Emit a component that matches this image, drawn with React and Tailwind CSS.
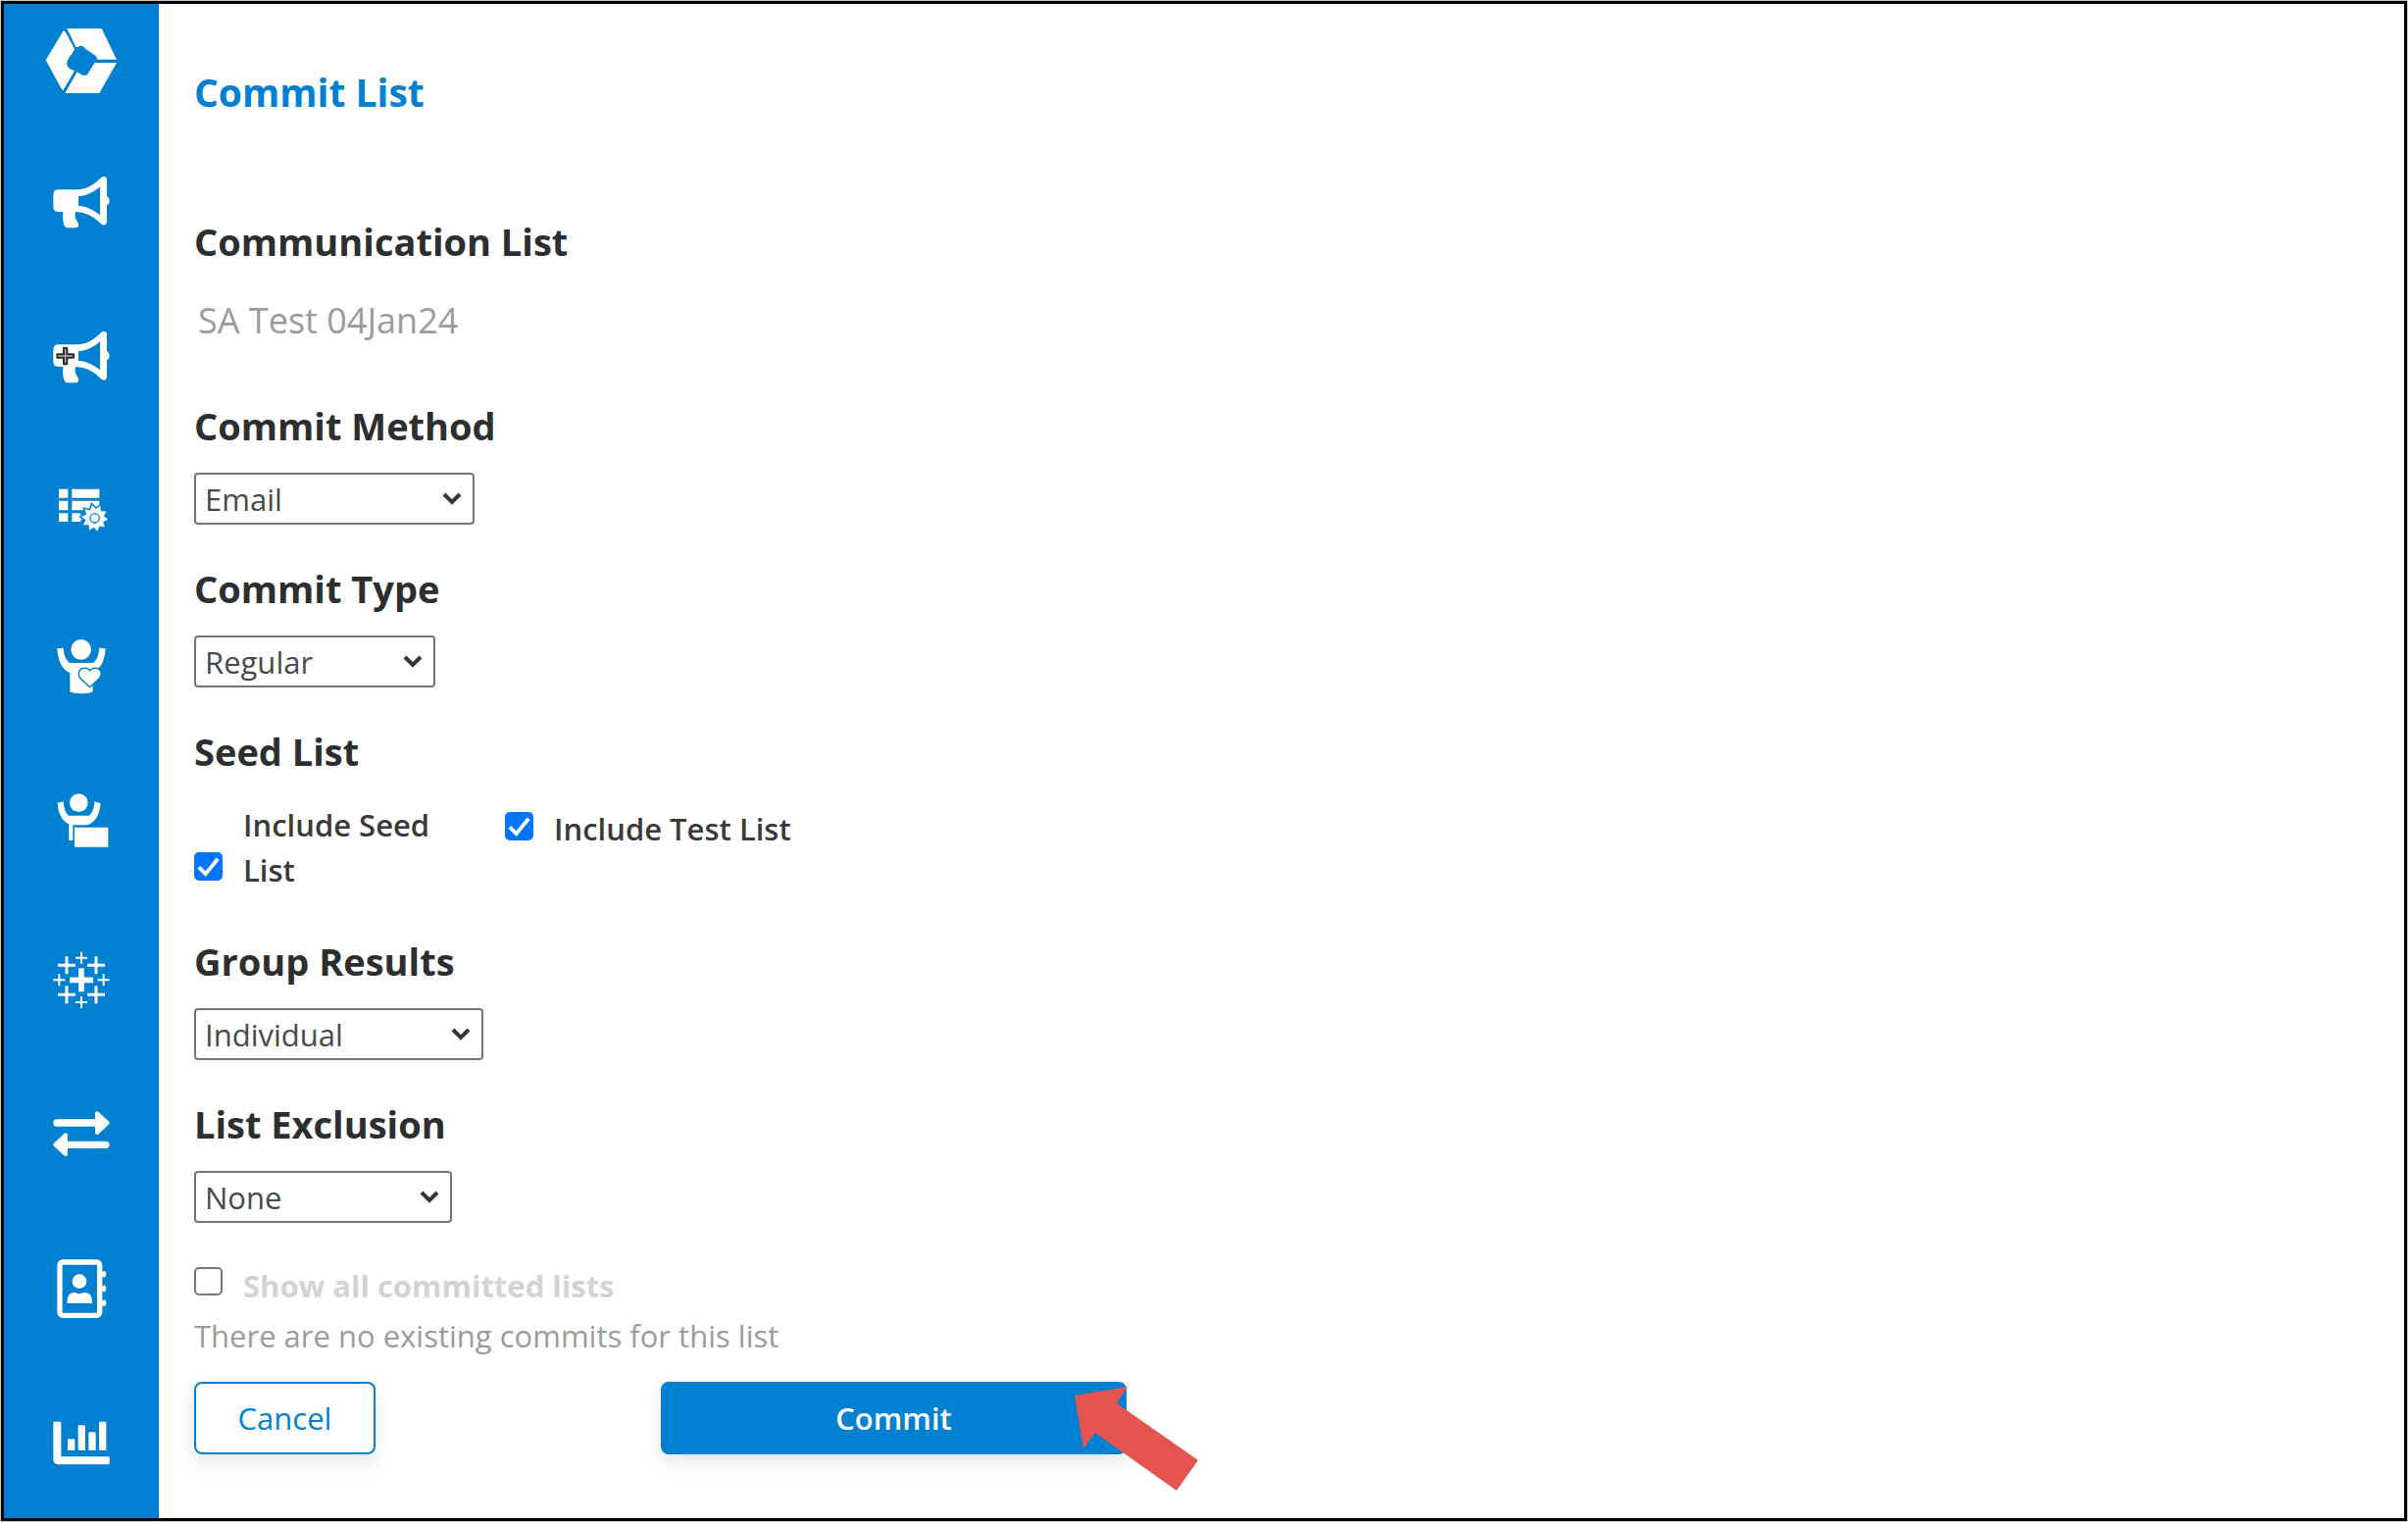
const BLUE = "#0080d1";

function Icon({ viewBox, children }) {
  return (
    <svg viewBox={viewBox} className="h-[60px] w-[60px] overflow-visible" fill="white" aria-hidden="true">
      {children}
    </svg>
  );
}

function Logo() {
  return (
    <svg viewBox="135 81 228 210" className="h-[70px] w-[76px]" fill="white" aria-hidden="true">
      <path d="M205 87H311L357 182H299Q296 171 286 166L261 149C255 140 247 138 240 143L232 144Z" />
      <path d="M357 192L304 285H199L236 220L248 227C257 234 267 231 271 222L288 194Q290 192 293 192Z" />
      <path d="M194 94L201 98L228 150L222 162Q220 168 214 171L206 186Q203 195 207 203Q211 210 218 212L228 217L193 277L187 270L140 184Z" />
    </svg>
  );
}

const megaphonePath =
  "M179 580H240C270 578 290 562 309 544C317 536 327 540 327 549V600Q335 604 335 614Q335 624 327 628V678C327 688 317 692 309 685C290 666 268 650 231 648C228 660 230 669 238 680C243 688 240 697 231 697H209C200 697 197 693 195 685C192 672 192 660 193 648H179Q163 648 163 632V596Q163 580 179 580ZM240 601V629C266 631 288 643 306 658V571C288 587 266 599 240 601Z";

function Megaphone() {
  return (
    <Icon viewBox="159 534 180 180">
      <path fillRule="evenodd" d={megaphonePath} />
    </Icon>
  );
}

function MegaphonePlus() {
  return (
    <Icon viewBox="159 534 180 180">
      <path fillRule="evenodd" d={megaphonePath} />
      <path
        d="M195 590h10v20h20v10h-20v20h-10v-20h-20v-10h20z"
        fill="#aaa"
        stroke="#2c2c2c"
        strokeWidth="6"
        strokeLinejoin="round"
      />
    </Icon>
  );
}

function gearPath(cx, cy, outer, inner, teeth) {
  const points = [];
  for (let i = 0; i < teeth * 2; i++) {
    const r = i % 2 ? inner : outer;
    const a = (Math.PI * i) / teeth + 0.1;
    points.push(`${(cx + r * Math.cos(a)).toFixed(1)} ${(cy + r * Math.sin(a)).toFixed(1)}`);
  }
  return `M${points.join("L")}Z`;
}

function ListSettings() {
  return (
    <Icon viewBox="159 552 180 180">
      <path d="M180 566h28v27h-28zM180 602h28v29h-28zM180 640h28v26h-28zM220 566h84v27h-84zM220 602h84v29h-84zM220 640h24l8 13-6 13h-26z" />
      <path d={gearPath(290, 655, 41, 28, 10)} stroke={BLUE} strokeWidth="9" />
      <path d={gearPath(290, 655, 41, 28, 10)} />
      <circle cx="290" cy="655" r="14" stroke={BLUE} strokeWidth="4" />
    </Icon>
  );
}

function PersonHeart() {
  const heart =
    "M275 239L249 215C238 202 244 187 257 186C266 185 271 189 275 195C279 189 285 185 293 186C307 187 313 202 301 215Z";
  return (
    <Icon viewBox="159 96 180 180">
      <circle cx="248" cy="127" r="31" />
      <path d="M175 124L194 122C196 145 201 158 213 168H285C296 158 302 145 304 122L323 124C321 155 312 183 284 199V256C272 264 226 264 214 256V199C188 187 177 160 175 124Z" />
      <path d={heart} stroke={BLUE} strokeWidth="9" strokeLinejoin="round" />
      <path d={heart} />
    </Icon>
  );
}

function PersonBox() {
  return (
    <Icon viewBox="159 570 180 180">
      <circle cx="241" cy="596" r="28" />
      <path d="M176 596L194 592C196 614 200 627 210 635H272C283 627 288 613 289 592L308 598C304 635 292 655 268 664H223V711H211V661C190 650 178 630 176 596Z" />
      <path d="M228 671h103v60h-103z" />
    </Icon>
  );
}

function plus(cx, cy, arm) {
  return `M${cx - arm} ${cy}h${arm * 2}M${cx} ${cy - arm}v${arm * 2}`;
}

function PlusCluster() {
  return (
    <Icon viewBox="159 84 180 180">
      <path d={plus(249, 178, 36)} stroke="white" strokeWidth="17" />
      <path
        d={plus(204, 133, 27) + plus(294, 133, 27) + plus(204, 223, 27) + plus(294, 223, 27)}
        stroke="white"
        strokeWidth="9"
      />
      <path
        d={plus(249, 110, 18) + plus(249, 246, 18) + plus(181, 178, 18) + plus(317, 178, 18)}
        stroke="white"
        strokeWidth="6"
      />
    </Icon>
  );
}

function Exchange() {
  return (
    <Icon viewBox="159 558 180 180">
      <path d="M174 615H305M193 682H324" stroke="white" strokeWidth="22" strokeLinecap="round" />
      <path
        d="M297 586L329 615L297 645ZM201 652L169 682L201 711Z"
        stroke="white"
        strokeWidth="12"
        strokeLinejoin="round"
      />
    </Icon>
  );
}

function AddressBook() {
  return (
    <Icon viewBox="159 132 180 180">
      <rect x="183" y="141" width="122" height="163" rx="9" fill="none" stroke="white" strokeWidth="16" />
      <path d="M306 178H319M306 222H319M306 266H319" stroke="white" strokeWidth="15" />
      <path d="M317 167q8 2 8 11t-8 11zM317 211q8 2 8 11t-8 11zM317 255q8 2 8 11t-8 11z" />
      <circle cx="243" cy="200" r="22" />
      <path d="M206 267V260C206 242 216 233 229 234Q243 241 257 234C271 233 282 242 282 260V267Z" />
    </Icon>
  );
}

function Chart() {
  return (
    <Icon viewBox="159 606 180 180">
      <path d="M163 632Q163 629 166 629H184Q187 629 187 632V736H332Q335 736 335 739V757Q335 760 332 760H178Q163 759 163 745Z" />
      <rect x="207" y="682" width="22" height="35" rx="4" />
      <rect x="239" y="640" width="22" height="77" rx="4" />
      <rect x="271" y="661" width="22" height="56" rx="4" />
      <rect x="303" y="629" width="22" height="88" rx="4" />
    </Icon>
  );
}

const navItems = [
  ["Campaigns", Megaphone],
  ["New campaign", MegaphonePlus],
  ["List settings", ListSettings],
  ["Supporters", PersonHeart],
  ["Presenters", PersonBox],
  ["Dashboards", PlusCluster],
  ["Transfers", Exchange],
  ["Contacts", AddressBook],
  ["Reports", Chart],
];

function Heading({ children, htmlFor }) {
  return (
    <h2 className="text-[38px] leading-[48px] font-bold text-[#2c2e2f]">
      {htmlFor ? <label htmlFor={htmlFor}>{children}</label> : children}
    </h2>
  );
}

function SelectField({ id, label, value, width }) {
  return (
    <section className="mb-[41px]">
      <Heading htmlFor={id}>{label}</Heading>
      <div className={`relative mt-6 ${width}`}>
        <select
          id={id}
          className="block h-[53px] w-full appearance-none rounded-[4px] border-2 border-[#767676] bg-white pl-[9px] text-[31px] leading-[46px] text-[#454a4d]"
        >
          <option>{value}</option>
        </select>
        <svg
          viewBox="0 0 20 14"
          className="pointer-events-none absolute top-5 right-[13px] h-[14px] w-5"
          fill="none"
          aria-hidden="true"
        >
          <path d="M2 2L10 10L18 2" stroke="#2f363c" strokeWidth="4" />
        </svg>
      </div>
    </section>
  );
}

function Checkbox({ id, defaultChecked, className }) {
  return (
    <span className={`relative h-[29px] w-[29px] shrink-0 ${className}`}>
      <input
        id={id}
        type="checkbox"
        defaultChecked={defaultChecked}
        className="peer block h-full w-full appearance-none rounded-[5px] border-2 border-[#767676] bg-white checked:border-[#0075ff] checked:bg-[#0075ff]"
      />
      <svg
        viewBox="0 0 30 30"
        className="pointer-events-none absolute inset-0 hidden h-full w-full peer-checked:block"
        fill="none"
        aria-hidden="true"
      >
        <path d="M5 16L12 23L25 7" stroke="white" strokeWidth="4" />
      </svg>
    </span>
  );
}

export default function App() {
  return (
    <div className="flex min-h-screen bg-[#c6cac6] p-px font-['Open_Sans',sans-serif]">
      <div className="flex flex-1 border-[3px] border-black bg-white">
        <nav className="w-[158px] shrink-0 bg-[#0080d1]">
          <a href="#home" aria-label="Home" className="flex justify-center pt-[23px]">
            <Logo />
          </a>
          <ul className="mt-[81px] flex flex-col items-center gap-[98px]">
            {navItems.map(([name, Glyph]) => (
              <li key={name}>
                <a href="#nav" aria-label={name} className="block h-[60px] w-[60px]">
                  <Glyph />
                </a>
              </li>
            ))}
          </ul>
        </nav>

        <main className="flex-1 pt-[66px] pl-9">
          <h1 className="text-[39px] leading-[48px] font-bold text-[#0080d1]">Commit List</h1>

          <form className="mt-[104px]" onSubmit={(e) => e.preventDefault()}>
            <section className="mb-[59px]">
              <Heading>Communication List</Heading>
              <p className="mt-[33px] pl-1 text-[36px] leading-[48px] text-[#9b9b9b]">SA Test 04Jan24</p>
            </section>

            <SelectField id="method" label="Commit Method" value="Email" width="w-[286px]" />
            <SelectField id="type" label="Commit Type" value="Regular" width="w-[246px]" />

            <section className="mb-[46px]">
              <Heading>Seed List</Heading>
              <div className="mt-7 flex text-[31px] leading-[46px] font-semibold text-[#3a3a3a]">
                <label className="flex w-[317px] items-end gap-[21px] pr-10">
                  <Checkbox defaultChecked className="mb-3" />
                  <span>Include Seed List</span>
                </label>
                <label className="mt-1 flex items-start gap-[21px]">
                  <Checkbox defaultChecked className="mt-1.5" />
                  <span>Include Test List</span>
                </label>
              </div>
            </section>

            <SelectField id="group" label="Group Results" value="Individual" width="w-[295px]" />
            <SelectField id="exclusion" label="List Exclusion" value="None" width="w-[263px]" />

            <label className="flex items-start gap-[21px] text-[31px] leading-[46px] font-bold text-[#d3d3d3]">
              <Checkbox className="mt-1" />
              <span>Show all committed lists</span>
            </label>
            <p className="mt-[5px] text-[31px] leading-[46px] text-[#9b9b9b]">
              There are no existing commits for this list
            </p>

            <div className="mt-6 flex gap-[291px] text-[31px] leading-[46px]">
              <button
                type="button"
                className="h-[74px] w-[185px] rounded-lg border-2 border-[#0080d1] bg-white text-[#0080d1] shadow-[0_8px_20px_rgba(0,0,0,0.1)]"
              >
                Cancel
              </button>
              <div className="relative">
                <button
                  type="submit"
                  className="h-[74px] w-[475px] rounded-lg bg-[#0080d1] font-semibold text-white shadow-[0_8px_20px_rgba(0,0,0,0.1)]"
                >
                  Commit
                </button>
                <svg
                  viewBox="0 0 126 107"
                  className="pointer-events-none absolute top-[5px] -right-[73px] h-[107px] w-[126px]"
                  aria-hidden="true"
                >
                  <path d="M0 9L54 0L43 17L126 75L104 106L21 47L9 63Z" fill="#e5554f" />
                </svg>
              </div>
            </div>
          </form>
        </main>
      </div>
    </div>
  );
}
